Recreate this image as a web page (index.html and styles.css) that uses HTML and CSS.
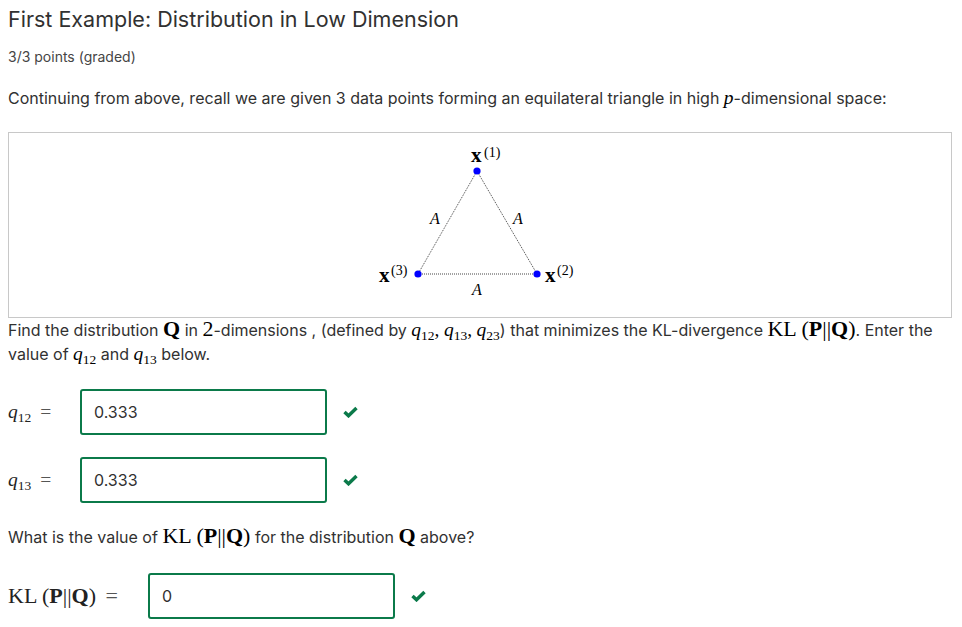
FILE: index.html
```html
<!DOCTYPE html>
<html lang="en">
<head>
<meta charset="utf-8">
<title>First Example: Distribution in Low Dimension</title>
<link rel="stylesheet" href="styles.css">
</head>
<body>
<div class="problem">
  <h2 class="title">First Example: Distribution in Low Dimension</h2>
  <div class="points">3/3 points (graded)</div>
  <p class="text intro">Continuing from above, recall we are given 3 data points forming an equilateral triangle in high <span class="m i">p</span>-dimensional space:</p>
  <div class="figure">
    <svg class="tri" width="220" height="180" viewBox="0 0 220 180">
      <g stroke="#444" stroke-width="1" stroke-dasharray="1 1" fill="none">
        <line x1="108" y1="36" x2="49" y2="139"/>
        <line x1="108" y1="36" x2="168" y2="139"/>
        <line x1="49" y1="139" x2="168" y2="139"/>
      </g>
      <g fill="#0000ff">
        <circle cx="108" cy="36" r="3.6"/>
        <circle cx="49" cy="139" r="3.6"/>
        <circle cx="168" cy="139" r="3.6"/>
      </g>
      <g class="svgmath">
        <text x="102" y="27" class="bx">x</text><text x="115" y="22" class="sup">(1)</text>
        <text x="10" y="147" class="bx">x</text><text x="22" y="140" class="sup">(3)</text>
        <text x="176" y="147" class="bx">x</text><text x="188" y="140" class="sup">(2)</text>
        <text x="61" y="89" class="ai">A</text>
        <text x="144" y="89" class="ai">A</text>
        <text x="103" y="160" class="ai">A</text>
      </g>
    </svg>
  </div>
  <p class="text find"><span>Find the distribution</span> <span class="m b big">Q</span> <span>in</span> <span class="m big">2</span><span>-dimensions , (defined by</span> <span class="m"><span class="i">q</span><sub>12</sub></span><span class="m">,</span> <span class="m"><span class="i">q</span><sub>13</sub></span><span class="m">,</span> <span class="m"><span class="i">q</span><sub>23</sub></span><span>) that minimizes the KL-divergence</span> <span class="m big"><span>KL</span> <span>(</span><span class="b">P</span><span>||</span><span class="b">Q</span><span>)</span></span><span>. Enter the</span> <span>value of</span> <span class="m"><span class="i">q</span><sub>12</sub></span> <span>and</span> <span class="m"><span class="i">q</span><sub>13</sub></span> <span>below.</span></p>

  <div class="answer-row first">
    <label class="lab m"><span class="i">q</span><sub>12</sub> <span class="eq">=</span></label>
    <div class="input">0.333</div>
    <svg class="check" width="15" height="12" viewBox="0 0 15 12"><polyline points="1.5,6 5.5,9.8 13.5,2" fill="none" stroke="#0b7a4a" stroke-width="3.4"/></svg>
  </div>
  <div class="answer-row">
    <label class="lab m"><span class="i">q</span><sub>13</sub> <span class="eq">=</span></label>
    <div class="input">0.333</div>
    <svg class="check" width="15" height="12" viewBox="0 0 15 12"><polyline points="1.5,6 5.5,9.8 13.5,2" fill="none" stroke="#0b7a4a" stroke-width="3.4"/></svg>
  </div>

  <p class="text what"><span>What is the value of</span> <span class="m big"><span>KL</span> <span>(</span><span class="b">P</span><span>||</span><span class="b">Q</span><span>)</span></span> <span>for the distribution</span> <span class="m big b">Q</span> <span>above?</span></p>

  <div class="answer-row kl">
    <label class="lab lab-kl m big"><span>KL</span> <span>(</span><span class="b">P</span><span>||</span><span class="b">Q</span><span>)</span> <span class="eq">=</span></label>
    <div class="input">0</div>
    <svg class="check" width="15" height="12" viewBox="0 0 15 12"><polyline points="1.5,6 5.5,9.8 13.5,2" fill="none" stroke="#0b7a4a" stroke-width="3.4"/></svg>
  </div>
</div>
</body>
</html>
```
FILE: styles.css
```css
html, body {
  margin: 0;
  padding: 0;
  background: #ffffff;
}
body {
  padding: 7px 8px 0 8px;
  font-family: Inter, "Noto Sans", "Liberation Sans", sans-serif;
  color: #313131;
}
.problem {
  display: flex;
  flex-direction: column;
  width: 946px;
}
.title {
  margin: 0;
  font-size: 21.5px;
  font-weight: 400;
  line-height: 24px;
  color: #313131;
}
.points {
  margin-top: 16px;
  font-size: 14px;
  line-height: 20px;
  color: #454545;
}
.text {
  margin: 0;
  font-size: 16px;
  line-height: 24px;
}
.intro {
  margin-top: 19px;
}
.figure {
  margin-top: 22px;
  width: 942px;
  height: 184px;
  border: 1px solid #c8c8c8;
  display: flex;
  justify-content: center;
  align-items: flex-start;
}
.tri {
  display: block;
  margin-top: 2px;
  margin-left: -2px;
}
.svgmath text {
  font-family: "Liberation Serif", "DejaVu Serif", serif;
  fill: #000;
}
.svgmath .bx {
  font-size: 21px;
  font-weight: 700;
}
.svgmath .sup {
  font-size: 14px;
}
.svgmath .ai {
  font-size: 16px;
  font-style: italic;
}
.find {
  margin-top: 0;
}
.m {
  font-family: "Liberation Serif", "DejaVu Serif", serif;
  font-size: 19.5px;
  line-height: 1;
  color: #000;
}
.m.big {
  font-size: 22px;
}
.i {
  font-style: italic;
}
.b {
  font-weight: 700;
}
.m sub {
  font-size: 13.5px;
  line-height: 1;
  vertical-align: baseline;
  position: relative;
  top: 4px;
}
.answer-row {
  display: flex;
  align-items: center;
  margin-top: 22px;
}
.answer-row.first {
  margin-top: 23px;
}
.lab {
  width: 72px;
  flex: none;
  color: #222;
}
.eq {
  color: #555;
  margin-left: 4px;
}
.lab-kl {
  width: 140px;
}
.input {
  box-sizing: border-box;
  width: 247px;
  height: 46px;
  border: 2px solid #0b7a4a;
  border-radius: 3px;
  padding: 0 12px;
  display: flex;
  align-items: center;
  font-size: 16px;
  color: #313131;
}
.check {
  display: block;
  margin-left: 16px;
}
.what {
  margin-top: 22px;
}
.answer-row.kl {
  margin-top: 24px;
}
```
